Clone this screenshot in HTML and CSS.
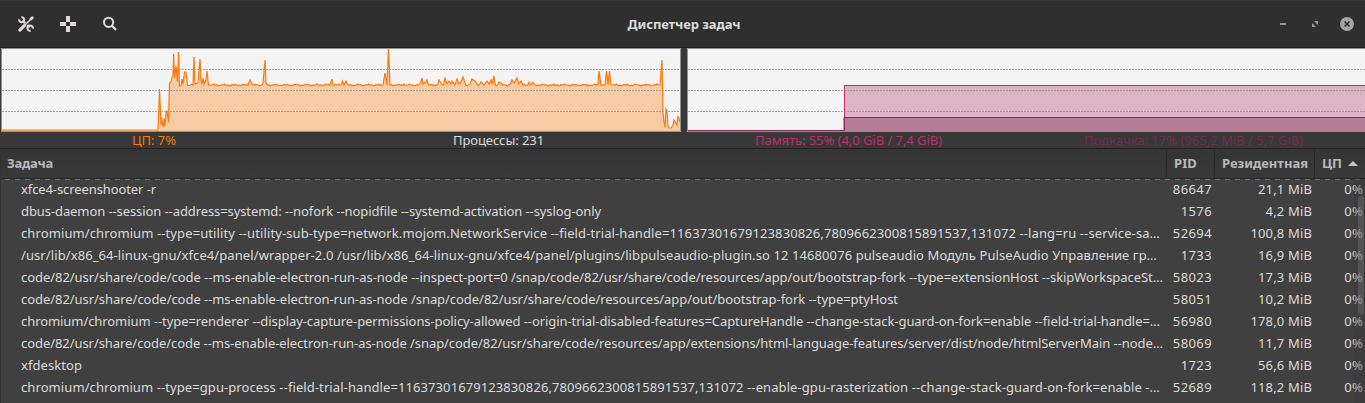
FILE: index.html
```html
<!DOCTYPE html>
<html lang="ru">
<head>
<meta charset="utf-8">
<title>Диспетчер задач</title>
<link rel="stylesheet" href="styles.css">
</head>
<body>
<header class="titlebar">
  <div class="tools">
    <svg class="tool" viewBox="0 0 16 16"><path d="M1.8 14.2 14 2" stroke="#dedada" stroke-width="1.6" stroke-linecap="round"/><path d="M1.9 14.1 6.3 9.7" stroke="#dedada" stroke-width="3.2" stroke-linecap="round"/><path d="m13 3 1.300-1.300" stroke="#dedada" stroke-width="2.8" stroke-linecap="round"/><path d="m4.500 4.500 2.700 2.700M9.200 9.200l2.300 2.300" stroke="#dedada" stroke-width="2.600"/><path d="M1.200 3.400A2.500 2.500 0 1 0 3.400 1.200M14.800 12.600A2.700 2.700 0 1 0 12.600 14.800" fill="none" stroke="#dedada" stroke-width="2.100"/></svg>
    <svg class="tool" viewBox="0 0 16 16" shape-rendering="crispEdges"><path d="M6 0h4v6H6zM0 6h6v4H0zM10 6h6v4h-6zM6 10h4v6H6z" fill="#dedada"/></svg>
    <svg class="tool" viewBox="0 0 16 16"><circle cx="6.6" cy="6.3" r="4.6" fill="none" stroke="#dedada" stroke-width="2"/><path d="m9.700 9.500 4.300 4.300" stroke="#dedada" stroke-width="2.4"/></svg>
  </div>
  <h1 class="title" data-width="113">Диспетчер задач</h1>
  <div class="controls">
    <svg class="control" viewBox="0 0 16 16"><path d="M5 7h6v2H5z" fill="#999"/></svg>
    <svg class="control" viewBox="0 0 16 16"><path d="M7 5h4v4zM5 7l4 4H5z" fill="#999"/></svg>
    <svg class="control" viewBox="0 0 16 16"><circle cx="8" cy="8" r="7" fill="#a5a5a5"/><path d="m5.5 5.5 5 5m0-5-5 5" stroke="#303030" stroke-width="1.7"/></svg>
  </div>
</header>
<section class="charts">
  <svg class="chart" viewBox="0 1 681 84">
    <rect x="1" y="1" width="680" height="84" fill="#f4f4f4"/>
    <path id="cpu-area" fill="#ff7800" fill-opacity=".32"/>
    <path class="grid" d="M2 22.5H680M2 43.5H680M2 64.5H680"/>
    <path id="cpu-line" fill="none" stroke="#fa7a10" stroke-width="1.2"/>
    <path class="frame" d="M1.500 1.500H680.5V84.5H1.500z"/>
  </svg>
  <svg class="chart" viewBox="0 1 678 84">
    <rect y="1" width="678" height="84" fill="#f4f4f4"/>
    <path d="M157 84V38H678V84z" fill="#ad2a62" fill-opacity=".32"/>
    <path d="M157 84V70H678V84z" fill="#7d2b50" fill-opacity=".4"/>
    <path class="grid" d="M1 22.5H678M1 43.5H678M1 64.5H678"/>
    <path d="M1 83.5H157.500V38.500H678" fill="none" stroke="#b93067"/>
    <path d="M1 83.5H157V70.500H678" fill="none" stroke="#7d2b50"/>
    <path class="frame" d="M678 1.500H.5V84.5H678"/>
  </svg>
</section>
<section class="legend">
  <span class="cpu" data-width="44">ЦП: 7%</span>
  <span class="processes" data-width="91">Процессы: 231</span>
  <span class="memory" data-width="187">Память: 55% (4,0 GiB / 7,4 GiB)</span>
  <span class="swap" data-width="219">Подкачка: 17% (965,2 MiB / 5,7 GiB)</span>
</section>
<main class="table">
  <div class="row head"><b><span data-width="46">Задача</span></b><b><span data-width="23">PID</span></b><b><span data-width="86">Резидентная</span></b><b><span data-width="20">ЦП</span><i class="sort"></i></b></div>
  <div class="row"><span><span data-width="135">xfce4-screenshooter -r</span></span><span>86647</span><span>21,1 MiB</span><span>0%</span></div>
  <div class="row"><span><span data-width="580">dbus-daemon --session --address=systemd: --nofork --nopidfile --systemd-activation --syslog-only</span></span><span>1576</span><span>4,2 MiB</span><span>0%</span></div>
  <div class="row"><span><span data-width="1139">chromium/chromium --type=utility --utility-sub-type=network.mojom.NetworkService --field-trial-handle=11637301679123830826,7809662300815891537,131072 --lang=ru --service-sa…</span></span><span>52694</span><span>100,8 MiB</span><span>0%</span></div>
  <div class="row"><span><span data-width="1136">/usr/lib/x86_64-linux-gnu/xfce4/panel/wrapper-2.0 /usr/lib/x86_64-linux-gnu/xfce4/panel/plugins/libpulseaudio-plugin.so 12 14680076 pulseaudio Модуль PulseAudio Управление гр…</span></span><span>1733</span><span>16,9 MiB</span><span>0%</span></div>
  <div class="row"><span><span data-width="1142">code/82/usr/share/code/code --ms-enable-electron-run-as-node --inspect-port=0 /snap/code/82/usr/share/code/resources/app/out/bootstrap-fork --type=extensionHost --skipWorkspaceSt…</span></span><span>58023</span><span>17,3 MiB</span><span>0%</span></div>
  <div class="row"><span><span data-width="877">code/82/usr/share/code/code --ms-enable-electron-run-as-node /snap/code/82/usr/share/code/resources/app/out/bootstrap-fork --type=ptyHost</span></span><span>58051</span><span>10,2 MiB</span><span>0%</span></div>
  <div class="row"><span><span data-width="1139">chromium/chromium --type=renderer --display-capture-permissions-policy-allowed --origin-trial-disabled-features=CaptureHandle --change-stack-guard-on-fork=enable --field-trial-handle=…</span></span><span>56980</span><span>178,0 MiB</span><span>0%</span></div>
  <div class="row"><span><span data-width="1142">code/82/usr/share/code/code --ms-enable-electron-run-as-node /snap/code/82/usr/share/code/resources/app/extensions/html-language-features/server/dist/node/htmlServerMain --node…</span></span><span>58069</span><span>11,7 MiB</span><span>0%</span></div>
  <div class="row"><span><span data-width="61">xfdesktop</span></span><span>1723</span><span>56,6 MiB</span><span>0%</span></div>
  <div class="row"><span><span data-width="1139">chromium/chromium --type=gpu-process --field-trial-handle=11637301679123830826,7809662300815891537,131072 --enable-gpu-rasterization --change-stack-guard-on-fork=enable -…</span></span><span>52689</span><span>118,2 MiB</span><span>0%</span></div>
  <div class="scrollbar"></div>
</main>
<script src="app.js"></script>
</body>
</html>
```
FILE: styles.css
```css
* { box-sizing: border-box; }
body {
  margin: 0;
  height: 403px;
  overflow: hidden;
  background: #383838;
  color: #dcdcdc;
  font: 13px/20px "Noto Sans", "Open Sans", sans-serif;
  white-space: nowrap;
}
.titlebar {
  height: 48px;
  padding: 1px 10px 1px 18px;
  display: grid;
  grid-template-columns: 1fr auto 1fr;
  align-items: center;
  background: #2f2f2f;
  border-top: 1px solid #383838;
  border-bottom: 1px solid #202020;
}
.tools { display: flex; gap: 26px; }
.tool { width: 16px; height: 16px; }
.title { margin: 0 0 0 -5px; font-size: 13px; font-weight: 700; }
.controls { display: flex; gap: 16px; justify-content: flex-end; }
.control { width: 16px; height: 16px; }
.charts { display: flex; gap: 6px; height: 84px; }
.chart { display: block; height: 84px; flex: 0 0 auto; }
.chart:first-child { width: 681px; }
.chart:last-child { width: 678px; }
.grid { fill: none; stroke: #777; stroke-opacity: .6; stroke-dasharray: 2 1; }
.frame { fill: none; stroke: #929292; }
.legend {
  height: 17px;
  display: grid;
  grid-template-columns: 308px 381px 319px 1fr;
  line-height: 17px;
  justify-items: center;
  border-bottom: 1px solid #242424;
}
.cpu { color: #f57900; }
.memory { color: #b93067; }
.swap { color: #752b4c; margin-left: 14px; }
.table { position: relative; height: 254px; background: #404040; border-left: 1px solid #333; }
.row {
  height: 22px;
  display: grid;
  grid-template-columns: 1166px 48px 100px 50px;
}
.row > span { padding-right: 3px; text-align: right; overflow: hidden; }
.row > span:first-child { padding-left: 20px; text-align: left; }
.row > span:nth-child(2) { letter-spacing: .4px; }
.row > span:nth-child(3) { letter-spacing: .15px; }
.row > span:last-child { padding-right: 2px; letter-spacing: .2px; }
.head {
  height: 30px;
  color: #b9b9b9;
  background: linear-gradient(#343434, #393939);
  border-bottom: 1px solid #242424;
  line-height: 28px;
}
.head b { padding-left: 7px; border-right: 1px solid #292929; }
.head b:first-child { padding-left: 6px; }
.head b:last-child { display: flex; align-items: center; height: 28px; gap: 6px; border-right: 0; }
.sort { border: 5px solid transparent; border-top: 0; border-bottom: 5px solid #c4c4c4; }
.head + .row { background: repeating-linear-gradient(90deg, transparent 0 4px, #777 4px 9px, transparent 9px 10px) 0 0 / 100% 1px no-repeat; }
.scrollbar {
  position: absolute;
  top: 30px;
  right: 0;
  width: 11px;
  height: 224px;
  background: rgba(56, 56, 56, .35);
}
.scrollbar::after {
  content: "";
  position: absolute;
  top: 17px;
  right: 1px;
  width: 6px;
  height: 119px;
  border-radius: 3px;
  background: rgba(130, 130, 130, .32);
}
```
FILE: app.js
```js
document.querySelectorAll('[data-width]').forEach(el => {
  el.style.display = 'inline-block';
  el.style.letterSpacing = '0';
  const natural = el.getBoundingClientRect().width;
  const count = el.textContent.length;
  el.style.letterSpacing = (el.dataset.width - natural) / count + 'px';
});

// Processor load samples: x, y in chart pixels.
const samples = [
  [1,83],[158,83],[159.500,42],[160.500,65],[161,78],[161.500,70],[162.500,77],[163.500,80],[164,71],[165,79],[166,65],[167,64],[168.500,75],[169.500,36],[171,35],[172,30],[173,29],[173.700,7],[174.500,31],[176,19],[177.500,35],[178.500,5],[179.500,39],[181,39],[182,32],[183,37],[184.500,25],[186,25],[187.500,38],
  [193,38],[194,10],[195,37],[198,36],[200,12],[201,33],[202,37],[203,31],[204,37],[206,33],[207,24],[208.500,38],[248,38],[250,33],[252,37],[263,36],[265,13],[266,36],[268,38],
  [330,38],[332,32],[333,38],[341,38],[342.500,34],[344,38],[346,34],[348,38],[383,38],[385,26],[387,38],[388.500,1],[390,38],
  [404,37],[420,37],[422,31],[423,37],[426,35],[427,33],[428,37],[438,37],[439,33],[441,36],[445,31],[447,37],[449,34],[451,37],[452,34],[455,38],[457,32],[459,37],[461,35],[463,30],[465,36],[470,37],[472,32],[475,34],[477,37],[481,35],[484,38],[487,34],[489,37],[491,33],[492,37],[494,29],[495,37],[499,35],[502,37],
  [510,37],[512,33],[514,36],[517,31],[519,37],[521,34],[523,38],[528,38],[529,35],[531,38],[533,35],[535,38],[598,38],[599,24],[601,38],[605,38],[606.500,24],[608,38],[609.500,24],[611,38],[660,38],[662,13],[663,66],[664,75],[665,80],[666,62],[667,64],[668,79],[669,81],[671,81],[673,78],[674,73],[677,78],[678,69],[680,75]
];
const points = [];
samples.forEach(([x, y], i) => {
  points.push([x, y]);
  const next = samples[i + 1];
  if (!next || y < 36 || y > 40 || next[0] - x < 4) return;
  for (let p = x + 1; p < next[0]; p += 1.500) {
    points.push([p, 38 + Math.sin(p * 1.700) * .5 + Math.sin(p * .61) * .5]);
  }
});
const line = 'M' + points.map(p => p.join(' ')).join('L');
document.getElementById('cpu-line').setAttribute('d', line);
document.getElementById('cpu-area').setAttribute('d', line + 'V84H1Z');
```
